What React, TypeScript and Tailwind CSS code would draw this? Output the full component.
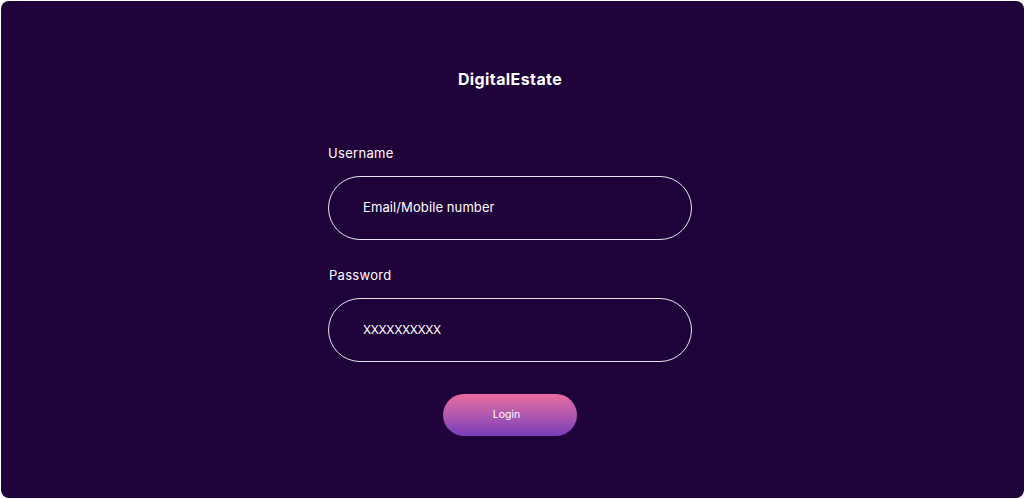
import React from "react";

export default function App() {
  return (
    <div className="h-[499px] w-[1025px] bg-white p-px" style={{ fontFamily: "Inter, 'Noto Sans', sans-serif" }}>
      <div className="flex h-[497px] w-[1023px] flex-col items-center rounded-[8px] bg-[#20023a] pr-[5px] pt-[67px]">
        <h1 className="text-[16px] font-bold leading-[22px] tracking-[0.4px] text-white">DigitalEstate</h1>

        <form className="mt-[54px] flex w-[364px] flex-col" onSubmit={(e) => e.preventDefault()}>
          <label className="text-[13px] leading-[18px] tracking-[0.3px] text-white">Username</label>
          <div className="mt-[14px] flex h-[64px] items-center rounded-full border border-[#e8e4ec] pl-[34px]">
            <span className="text-[13px] tracking-[0.1px] text-white">Email/Mobile number</span>
          </div>

          <label className="mt-[26px] pl-px text-[13px] leading-[18px] tracking-[0.3px] text-white">Password</label>
          <div className="mt-[14px] flex h-[64px] items-center rounded-full border border-[#e8e4ec] pl-[34px]">
            <span className="text-[12px] tracking-[-0.4px] text-white">XXXXXXXXXX</span>
          </div>

          <button
            type="submit"
            className="mx-auto mt-[32px] h-[42px] w-[134px] rounded-full bg-gradient-to-b from-[#ea6c9e] to-[#7b3bbb] pr-[7px] text-[10.5px] text-white"
          >
            Login
          </button>
        </form>
      </div>
    </div>
  );
}
